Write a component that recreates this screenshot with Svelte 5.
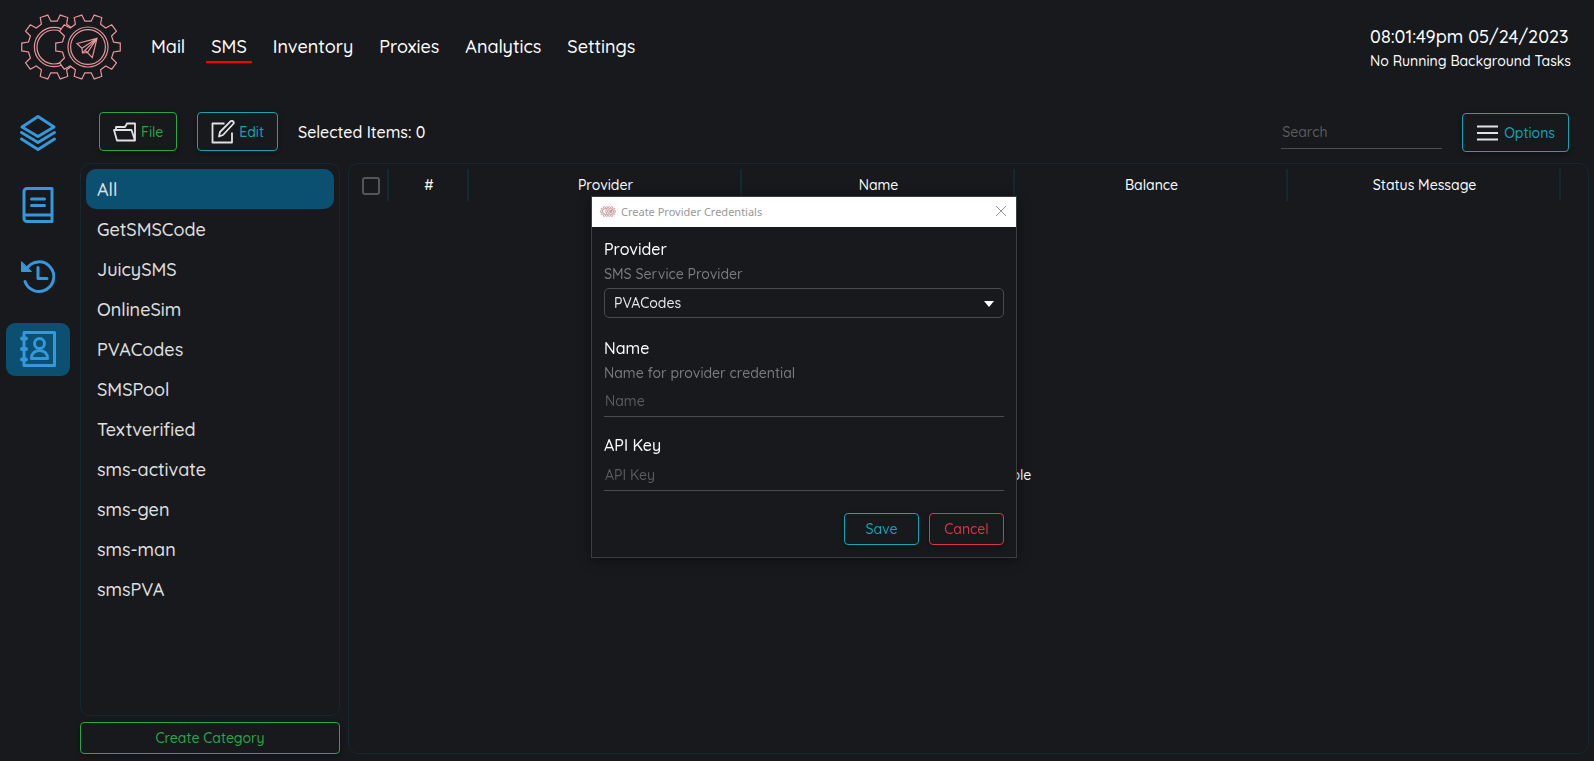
<script>
  const links = ["Mail", "SMS", "Inventory", "Proxies", "Analytics", "Settings"];
  const categories = [
    "All",
    "GetSMSCode",
    "JuicySMS",
    "OnlineSim",
    "PVACodes",
    "SMSPool",
    "Textverified",
    "sms-activate",
    "sms-gen",
    "sms-man",
    "smsPVA",
  ];
  const columns = ["Provider", "Name", "Balance", "Status Message"];
  const tools = ["Services", "Orders", "History", "Credentials"];

  let page = "SMS";
  let tool = "Credentials";
  let category = "All";
  let open = true;
  let provider = "PVACodes";
  let name = "";
  let apiKey = "";
  let search = "";

  function gear(cx, cy) {
    const points = [];
    for (let i = 0; i < 10; i++) {
      for (const [off, r] of [[-11, 26], [-7, 32.5], [7, 32.5], [11, 26]]) {
        const a = ((i * 36 + off) * Math.PI) / 180;
        points.push((cx + r * Math.cos(a)).toFixed(2) + "," + (cy + r * Math.sin(a)).toFixed(2));
      }
    }
    return points.join(" ");
  }
  const leftGear = gear(34, 34);
  const rightGear = gear(68, 34);

  function close() {
    open = false;
  }
</script>

{#snippet logo()}
  <svg class="logo" viewBox="0 0 102 68" aria-hidden="true">
    <polygon points={leftGear} />
    <circle cx="34" cy="34" r="19.6" />
    <circle cx="34" cy="34" r="17" />
    <polygon points={rightGear} />
    <circle cx="68" cy="34" r="20" />
    <circle cx="68" cy="34" r="17.4" />
    <path d="M57 30.5 77 25.3 72.3 44.6 67.5 39.5 62.5 39.8 62 35.2ZM62 35.2 77 25.3 62.5 39.8M77 25.3 67.5 39.5M65 37.5l2.5 2" />
  </svg>
{/snippet}

<div class="app">
  <header>
    {@render logo()}
    <nav>
      {#each links as link}
        <a href="#{link}" class:current={link === page} on:click={() => (page = link)}>{link}</a>
      {/each}
    </nav>
    <div class="status">
      <div class="clock">08:01:49pm 05/24/2023</div>
      <div class="tasks">No Running Background Tasks</div>
    </div>
  </header>

  <div class="body">
    <aside>
      {#each tools as item}
        <button class="tool" class:active={item === tool} aria-label={item} on:click={() => (tool = item)}>
          <svg width="38" height="38" viewBox="0 0 38 38">
            {#if item === "Services"}
              <path d="M19 2.5 35 13 19 22.5 3 13Z" />
              <path d="M2.5 18.5 19 28.5 35.5 18.5M2.5 25 19 35.5 35.5 25" />
            {:else if item === "Orders"}
              <path d="M33 2.5V35.5H8A3 3 0 0 1 5 32.5V5.5A3 3 0 0 1 8 2.5ZM5 29H33M12.5 13H25.5M12.5 19.5H25.5" />
            {:else if item === "History"}
              <path d="M6 23.5A14.8 14.8 0 1 0 8 10M19 9.5V20.5H28" />
              <path class="solid" d="M2.5 4V13.5H12Z" />
            {:else}
              <path d="M5 2.5H35.5V35.5H5Z" />
              <path class="thick" d="M3 8.5H7M3 19H7M3 29.5H7" />
              <circle cx="20.5" cy="13.5" r="5" />
              <path d="M12.5 28.5C12.5 23.5 15.5 20.5 20.5 20.5S28.5 23.5 28.5 28.5Z" />
            {/if}
          </svg>
        </button>
      {/each}
    </aside>

    <main>
      <div class="toolbar">
        <button class="btn green big">
          <svg width="24" height="24" viewBox="0 0 24 24">
            <path d="M3 9.5V7H12L14 3.500H22V20.500M1 10H18.500L22 20.500H4Z" />
          </svg>
          File
        </button>
        <button class="btn teal big">
          <svg width="24" height="24" viewBox="0 0 24 24">
            <path d="M13.500 3.500H1.500V22.500H21V12.500M8 16.500 9 12 19.500 1.300Q21 .3 22.200 1.500T22.200 4L12 15Z" />
          </svg>
          Edit
        </button>
        <span class="selected">Selected Items: 0</span>
        <div class="right">
          <input class="search" type="text" placeholder="Search" aria-label="Search" bind:value={search} />
          <button class="btn teal big">
            <svg width="24" height="24" viewBox="0 0 24 24">
              <path d="M1 5.500H22M1 12H22M1 18.500H22" />
            </svg>
            Options
          </button>
        </div>
      </div>

      <div class="panels">
        <div class="left">
          <div class="panel list">
            {#each categories as item}
              <button class="category" class:active={item === category} on:click={() => (category = item)}>{item}</button>
            {/each}
          </div>
          <button class="btn green">Create Category</button>
        </div>

        <div class="panel grid">
          <table>
            <thead>
              <tr>
                <th class="check"><input type="checkbox" aria-label="Select all" /></th>
                <th class="num">#</th>
                {#each columns as column}
                  <th>{column}</th>
                {/each}
              </tr>
            </thead>
          </table>
          <div class="empty">No Data Available</div>
        </div>
      </div>
    </main>
  </div>
</div>

{#if open}
  <div class="window" role="dialog" aria-label="Create Provider Credentials">
    <div class="titlebar">
      {@render logo()}
      <span>Create Provider Credentials</span>
      <button class="close" aria-label="Close" on:click={close}>
        <svg width="12" height="12" viewBox="0 0 12 12"><path d="M1 1 11 11M11 1 1 11" /></svg>
      </button>
    </div>
    <form on:submit|preventDefault={close}>
      <label for="provider">Provider</label>
      <p>SMS Service Provider</p>
      <div class="select">
        <select id="provider" bind:value={provider}>
          {#each categories.slice(1) as item}
            <option>{item}</option>
          {/each}
        </select>
        <svg width="10" height="6" viewBox="0 0 10 6"><path d="M0 0H10L5 6Z" /></svg>
      </div>
      <label for="name">Name</label>
      <p>Name for provider credential</p>
      <input id="name" type="text" placeholder="Name" bind:value={name} />
      <label for="key">API Key</label>
      <input id="key" type="text" placeholder="API Key" bind:value={apiKey} />
      <div class="actions">
        <button class="btn teal" type="submit">Save</button>
        <button class="btn red" type="button" on:click={close}>Cancel</button>
      </div>
    </form>
  </div>
{/if}

<style>
  :global(body) {
    background: #17191d;
  }
  .app,
  .window,
  button,
  input,
  select {
    font-family: Quicksand, Lato, sans-serif;
    font-size: 14px;
    font-weight: 500;
  }
  .app,
  .app *,
  .window,
  .window * {
    box-sizing: border-box;
  }
  .app {
    display: flex;
    flex-direction: column;
    min-height: 100vh;
    background: #17191d;
    color: #fff;
  }
  svg {
    flex: none;
    fill: none;
  }
  button {
    cursor: pointer;
  }
  header {
    display: flex;
    align-items: center;
    height: 94px;
    padding: 0 23px 0 20px;
  }
  .logo {
    width: 102px;
    height: 68px;
    stroke: #e8969b;
    stroke-width: 1.2;
    fill: #17191d;
  }
  nav {
    display: flex;
    gap: 16px;
    margin: 2px 0 0 24px;
  }
  nav a {
    padding: 0 5px;
    color: #fff;
    font-size: 18px;
    line-height: 28px;
    text-decoration: none;
    border-bottom: 2px solid transparent;
  }
  nav a.current {
    border-color: #f00;
  }
  .status {
    margin: 3px 0 0 auto;
    line-height: 25px;
  }
  .clock {
    font-size: 18px;
  }
  .body {
    display: flex;
    flex: 1;
  }
  aside {
    display: flex;
    flex-direction: column;
    gap: 19px;
    width: 80px;
    padding: 13px 10px 0 6px;
  }
  .tool {
    display: flex;
    align-items: center;
    justify-content: center;
    height: 53px;
    padding: 0 1px 2px 0;
    border: none;
    border-radius: 9px;
    background: none;
  }
  .tool svg {
    stroke: #3498db;
    stroke-width: 3;
    stroke-linecap: round;
    stroke-linejoin: round;
  }
  .tool .solid {
    fill: #3498db;
    stroke-width: 1;
    stroke-linejoin: miter;
  }
  .tool .thick {
    stroke-width: 4;
  }
  .active {
    background: #0b4f71;
  }
  main {
    display: flex;
    flex-direction: column;
    flex: 1;
    min-width: 0;
    padding: 18px 5px 7px 0;
  }
  .toolbar {
    display: flex;
    align-items: center;
    gap: 20px;
    height: 39px;
    padding: 0 20px 0 19px;
  }
  .right {
    display: flex;
    align-items: center;
    gap: 20px;
    margin: 2px 0 0 auto;
  }
  .btn {
    display: flex;
    align-items: center;
    justify-content: center;
    gap: 4px;
    height: 32px;
    border: 1px solid;
    border-radius: 4px;
    background: #17191d;
    box-shadow: 0 2px 5px rgba(0, 0, 0, 0.3);
  }
  .big {
    height: 39px;
    padding: 0 13px;
  }
  .btn svg {
    stroke: #e2e2e2;
    stroke-width: 1.8;
    stroke-linejoin: round;
  }
  .green {
    color: #28a745;
  }
  .teal {
    color: #17a2b8;
  }
  .red {
    color: #dc3545;
  }
  .selected {
    font-size: 16px;
  }
  input[type="text"] {
    height: 32px;
    padding: 0 1px;
    border: none;
    border-bottom: 1px solid #4b4b4b;
    outline: none;
    background: none;
    color: #fff;
  }
  input::placeholder {
    color: #5b5b5b;
    opacity: 1;
  }
  .search {
    width: 161px;
  }
  .panels {
    display: flex;
    flex: 1;
    gap: 8px;
    margin-top: 12px;
  }
  .left {
    display: flex;
    flex-direction: column;
    gap: 6px;
    width: 260px;
  }
  .panel {
    padding: 5px;
    border: 1px solid #152730;
    border-radius: 10px;
  }
  .list {
    flex: 1;
  }
  .category {
    display: block;
    width: 100%;
    height: 40px;
    padding: 0 11px;
    border: none;
    border-radius: 10px;
    color: #e0e0e0;
    font-size: 18px;
    text-align: left;
  }
  .category:not(.active) {
    background: none;
  }
  .grid {
    display: flex;
    flex-direction: column;
    flex: 1;
    min-width: 0;
    padding-right: 27px;
  }
  table {
    width: 100%;
    table-layout: fixed;
    border-collapse: separate;
    border-spacing: 0;
  }
  th {
    height: 32px;
    padding: 0;
    box-shadow: inset -2px 0 #152730;
    font-weight: 500;
  }
  .check {
    width: 35px;
  }
  .num {
    width: 80px;
  }
  th input {
    display: block;
    width: 18px;
    height: 18px;
    margin: 2px 0 0 8px;
    appearance: none;
    border: 2px solid #555;
    border-radius: 3px;
  }
  th input:checked {
    background: #3498db;
  }
  .empty {
    display: flex;
    flex: 1;
    align-items: center;
    justify-content: center;
    padding-left: 29px;
  }
  .window {
    position: fixed;
    top: 196px;
    left: 591px;
    width: 426px;
    border: 1px solid #3b3c3f;
    background: #17191d;
    color: #fff;
    box-shadow: 0 2px 12px rgba(0, 0, 0, 0.4);
  }
  .titlebar {
    display: flex;
    align-items: center;
    gap: 5px;
    height: 30px;
    padding: 0 8px 2px;
    background: #fff;
    color: #999;
    font-family: "Noto Sans", sans-serif;
    font-size: 11px;
    font-weight: 400;
  }
  .titlebar .logo {
    width: 16px;
    height: 11px;
    stroke: #b98084;
    stroke-width: 4;
    fill: #fff;
  }
  .close {
    display: flex;
    margin-left: auto;
    padding: 1px;
    border: none;
    background: none;
  }
  .close svg {
    stroke: #999;
  }
  form {
    display: flex;
    flex-direction: column;
    padding: 10px 12px 12px;
  }
  label {
    font-size: 16px;
    line-height: 25px;
  }
  p {
    margin: 0;
    color: #7b7b7b;
    line-height: 25px;
  }
  .select {
    position: relative;
    margin: 1px 0 18px;
  }
  select {
    display: block;
    width: 100%;
    height: 30px;
    padding: 0 9px;
    appearance: none;
    border: 1px solid #4b4b4b;
    border-radius: 5px;
    background: #17191d;
    color: #e8e8e8;
  }
  .select svg {
    position: absolute;
    top: 13px;
    right: 10px;
    fill: #fff;
    pointer-events: none;
  }
  #name {
    margin: -1px 0 16px;
  }
  #key {
    margin-top: 1px;
  }
  .actions {
    display: flex;
    justify-content: flex-end;
    gap: 10px;
    margin-top: 22px;
  }
  .actions .btn {
    width: 75px;
    padding: 0;
  }
</style>
